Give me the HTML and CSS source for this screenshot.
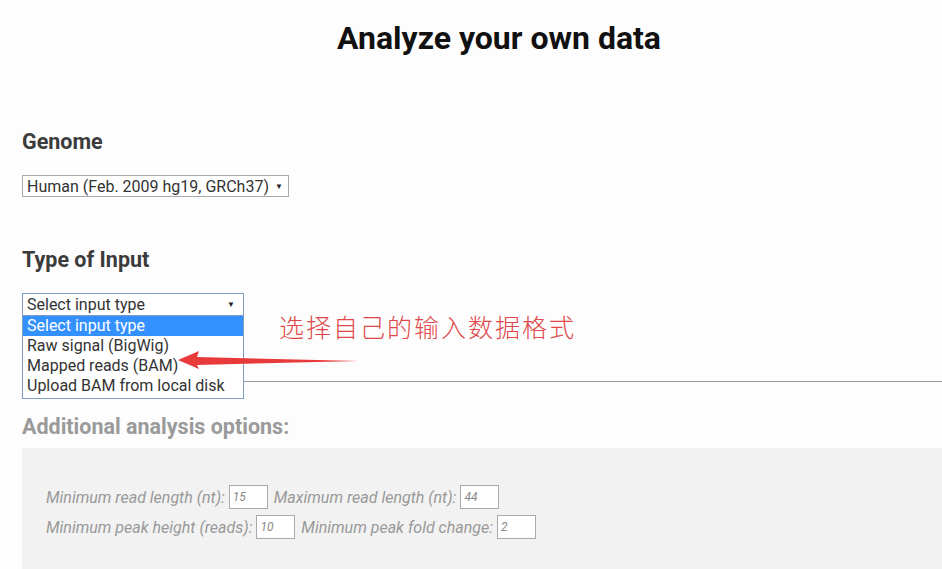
FILE: index.html
```html
<!DOCTYPE html>
<html>
<head>
<meta name="viewport" content="width=device-width, initial-scale=1">
<link rel="stylesheet" href="styles.css">
</head>
<body>

  <div class="page">
    <h1>Analyze your own data</h1>

    <h2 class="genome-title">Genome</h2>
    <div class="fake-select genome-select">
      <span>Human (Feb. 2009 hg19, GRCh37)</span>
      <span class="caret">&#9660;</span>
    </div>

    <h2 class="input-title">Type of Input</h2>
    <div class="select-wrap">
      <div class="fake-select input-select">
        <span>Select input type</span>
        <span class="caret">&#9660;</span>
      </div>
      <!-- the open dropdown list -->
      <ul class="options">
        <li class="picked">Select input type</li>
        <li>Raw signal (BigWig)</li>
        <li>Mapped reads (BAM)</li>
        <li>Upload BAM from local disk</li>
      </ul>
    </div>

    <hr>

    <h2 class="muted">Additional analysis options:</h2>
    <div class="options-panel">
      <div class="opt-row">
        <label>Minimum read length (nt):</label> <input type="text" value="15">
        <label>Maximum read length (nt):</label> <input type="text" value="44">
      </div>
      <div class="opt-row">
        <label>Minimum peak height (reads):</label> <input type="text" value="10">
        <label>Minimum peak fold change:</label> <input type="text" value="2">
      </div>
    </div>
  </div>

  <!-- annotation drawn over the screenshot -->
  <div class="note">选择自己的输入数据格式</div>
  <svg class="arrow" width="942" height="569" viewBox="0 0 942 569">
    <polygon points="178,360 199,351 197,357 359,361 197,365 199,369" fill="#e83a3a"/>
  </svg>

</body>
</html>
```

FILE: styles.css
```css
body {
  margin: 0;
  background-color: #fdfdfd;
  font-family: Roboto, "Liberation Sans", sans-serif;
  overflow: hidden;
  position: relative;
  height: 569px;
}

* {
  box-sizing: border-box;
}

.page {
  width: 954px;
  margin-left: 22px;
}

h1 {
  margin: 0;
  padding-top: 18px;
  text-align: center;
  font-size: 32px;
  line-height: 40px;
  font-weight: 700;
  color: #111;
}

h2 {
  margin: 0;
  font-size: 21.5px;
  line-height: 24px;
  font-weight: 700;
  color: #3b3b3b;
}

.genome-title {
  margin-top: 72px;
}

.input-title {
  margin-top: 51px;
}

/* select boxes drawn by hand */
.fake-select {
  display: flex;
  align-items: center;
  justify-content: space-between;
  background: #fff;
  border: 1px solid #a9a9a9;
  font-size: 16px;
  color: #333;
  padding: 0 4px;
  white-space: nowrap;
}

.caret {
  font-size: 8px;
  color: #222;
}

.genome-select {
  margin-top: 21px;
  width: 267px;
  height: 22px;
}

.genome-select .caret {
  margin-left: 6px;
  margin-right: 2px;
}

.select-wrap {
  position: relative;
  margin-top: 21px;
  width: 222px;
}

.input-select {
  height: 23px;
  border-color: #7f9dc4;
}

.input-select .caret {
  margin-right: 4px;
}

.options {
  position: absolute;
  top: 100%;
  left: 0;
  width: 222px;
  margin: 0;
  padding: 0;
  list-style: none;
  background: #fff;
  border: 1px solid #7f9dc4;
  border-top: none;
  font-size: 16px;
  color: #333;
  white-space: nowrap;
  z-index: 2;
}

.options li {
  height: 20px;
  line-height: 20px;
  padding-left: 4px;
}

.options li:last-child {
  height: 22px;
}

.options li.picked {
  background-color: #3390ff;
  color: #fff;
}

hr {
  margin: 65px 0 0 0;
  border: none;
  border-top: 1px solid #999;
  height: 1px;
}

.muted {
  margin-top: 33px;
  color: #9a9a9a;
}

.options-panel {
  margin-top: 9px;
  height: 200px;
  background-color: #f2f2f2;
  padding: 37px 24px 0 24px;
}

.opt-row {
  height: 30px;
  font-size: 16px;
  font-style: italic;
  color: #999;
  white-space: nowrap;
}

.opt-row input {
  width: 39px;
  height: 24px;
  border: 1px solid #aaa;
  background: #fff;
  font-family: Roboto, sans-serif;
  font-size: 12px;
  font-style: italic;
  color: #888;
  padding: 0 3px;
  vertical-align: middle;
  margin-right: 2px;
}

.opt-row label {
  vertical-align: middle;
}

.note {
  position: absolute;
  left: 279px;
  top: 308px;
  font-family: "Noto Sans CJK SC", sans-serif;
  font-size: 25px;
  letter-spacing: 2px;
  font-weight: 300;
  color: #e0474a;
}

.arrow {
  position: absolute;
  left: 0;
  top: 0;
  z-index: 3;
}
```
